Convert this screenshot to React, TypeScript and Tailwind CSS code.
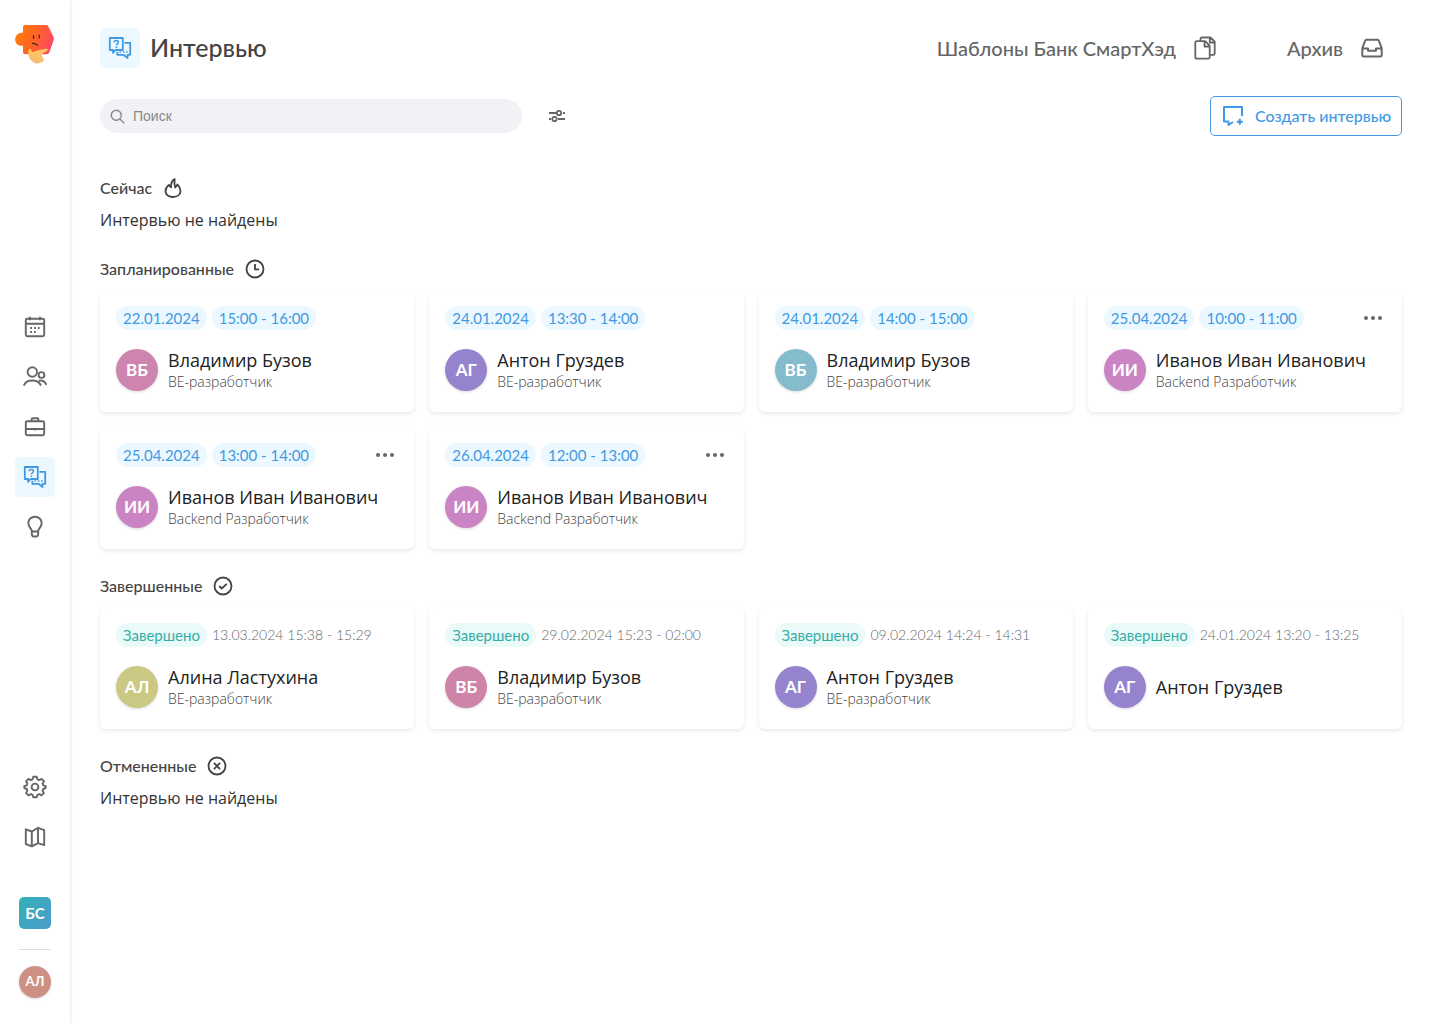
import React from 'react';

type IconProps = { className?: string };

function Svg({ className = 'size-6', children, sw = 1.9, box = '0 0 24 24' }: IconProps & { children: React.ReactNode; sw?: number; box?: string }) {
  return (
    <svg className={className} viewBox={box} fill="none" stroke="currentColor" strokeWidth={sw} strokeLinejoin="round" aria-hidden="true">
      {children}
    </svg>
  );
}

function Logo() {
  return (
    <svg className="h-10 w-10" viewBox="0 0 40 40" aria-hidden="true">
      <defs>
        <linearGradient id="head" x1="0" y1="0.3" x2="1" y2="0.6">
          <stop offset="0" stopColor="#ff7a0d" />
          <stop offset="0.5" stopColor="#ff6425" />
          <stop offset="1" stopColor="#ff4769" />
        </linearGradient>
        <linearGradient id="hand" x1="0" y1="0" x2="0" y2="1">
          <stop offset="0" stopColor="#ffc95c" />
          <stop offset="1" stopColor="#f3bb74" />
        </linearGradient>
      </defs>
      <path d="M10 1h21q1.600 0 2.400 1.400l5 10.400q.8 1.500.3 3.200l-4.400 12.500q-.6 1.700-2.500 1.700H10q-2 0-2-2v-6.500C3 22.500.2 19.500.2 15.500.2 11.500 3.500 8.500 8 8.500V3q0-2 2-2Z" fill="url(#head)" />
      <path d="M14 25.500c.6-1.500 1.700-.8 2 .6l1.200 2.200c2.500-1.200 5-1.700 7.800-2.300l5.800-1.200c2.300-.3 2.800 1.200 1 2.200l-4.600 2.600c-.9.700-.5 1.700 0 2.700l1.600 3.500q.5 1.400-1 2l-5 1.700q-2 .4-3.800-.8l-3.400-3c-2.200-2.300-3-7.100-1.600-10.200Z" fill="url(#hand)" />
      <path d="M18.500 11.500v3M24.200 11v3M17.300 19.400c2-.3 3.800.6 5.400 2" fill="none" stroke="#3c2720" strokeWidth="1.200" strokeLinecap="round" />
    </svg>
  );
}

function ChatIcon({ className }: IconProps) {
  return (
    <Svg className={className} sw={1.800}>
      <path d="M1.800 2h13v12H7.500L5 16.800V14H1.800V2Z" />
      <path d="M16.500 6.800h5.700v12H19.500V22l-4-3.200H9.300v-3" />
      <path d="M6.200 6.300c0-2.300 4.200-2.300 4.200 0 0 1.500-2 1.500-2 3M8.400 10.500V12" strokeWidth="1.500" />
      <path d="M11.500 16h1.600M14.800 16h1.600M18.100 16h1.600" strokeWidth="1.600" />
    </Svg>
  );
}

function CalendarIcon() {
  return (
    <Svg>
      <rect x="2.800" y="3.800" width="18.400" height="17.400" rx="1.500" />
      <path d="M3 8.800h18M7 1.800v3.500M17 1.800v3.500" />
      <path d="M11 13h1.800M14.800 13h1.800M7.200 13H9M7.200 17H9M11 17h1.800" strokeWidth="1.800" />
    </Svg>
  );
}

function PeopleIcon() {
  return (
    <Svg>
      <circle cx="9.300" cy="7" r="4.700" />
      <circle cx="18.500" cy="10" r="2.900" />
      <path d="M.8 20.500c1.400-3.200 4.500-5 8.500-5s7 1.600 8.700 5M15.500 15.800c3.500-1 6.500.8 7.900 4" />
    </Svg>
  );
}

function BriefcaseIcon() {
  return (
    <Svg>
      <rect x="2.800" y="6.300" width="18.400" height="14" rx="1.500" />
      <path d="M8.500 6V4.800q0-1.500 1.500-1.500h4q1.500 0 1.500 1.500V6M3 14h18M12 13v2.500" />
    </Svg>
  );
}

function BulbIcon() {
  return (
    <Svg>
      <path d="M9 16.300c0-2.500-3.700-4-3.700-8.300a6.700 6.300 0 0 1 13.400 0c0 4.300-3.700 5.800-3.700 8.300M8.800 16.500h6.400V19q0 2.500-2.200 2.500h-2q-2.200 0-2.200-2.500v-2.500Z" />
    </Svg>
  );
}

function GearIcon() {
  return (
    <Svg>
      <circle cx="12" cy="12" r="3.400" />
      <path d="M10.300 1.800h3.400l.8 2.600 1.700.7 2.400-1.200 2.300 2.300-1.300 2.500.7 1.700 2.400.8v1.800l-2.400 1-.7 1.600 1.300 2.500-2.400 2.300-2.300-1.300-1.700.7-.8 2.500h-3.400l-.8-2.500-1.700-.7-2.300 1.300-2.400-2.300 1.300-2.500-.7-1.600-2.400-1v-1.800l2.400-.8.7-1.700-1.300-2.500 2.400-2.300 2.300 1.200 1.700-.7.800-2.600Z" />
    </Svg>
  );
}

function MapIcon() {
  return (
    <Svg>
      <path d="m2.800 4.300 6 2.200 6.200-3.700 6.200 2.300v15l-6.200-2-6.200 3.200-6-2.300V4.300ZM8.800 6.500v14.800M15 2.800v15.300" />
    </Svg>
  );
}

function FilesIcon() {
  return (
    <Svg sw={1.800}>
      <path d="M7.500 4.800V3q0-1.500 1.500-1.500h8.500l4.200 4.200v11.800q0 1.300-1.300 1.300h-3.200M16.800 2v4.500h4.700" />
      <path d="M3.800 5.200h8.400l4.500 4.500v11.500q0 1.500-1.500 1.500H3.800q-1.500 0-1.500-1.500V6.700q0-1.500 1.500-1.500ZM11.500 5.500v5h5" />
    </Svg>
  );
}

function TrayIcon() {
  return (
    <Svg sw={2}>
      <path d="M6.500 3.800h11q1 0 1.400 1l2.800 7.400V19q0 1.500-1.500 1.500H3.800Q2.300 20.500 2.300 19v-6.800l2.800-7.400q.4-1 1.400-1ZM2.300 12.500H8v2.300h8v-2.300h5.700" />
    </Svg>
  );
}

function NewChatIcon() {
  return (
    <Svg sw={2}>
      <path d="M21 12V3H3v14.500h4.500V21l4.500-3M18.800 14.800v6M15.800 17.800h6" />
    </Svg>
  );
}

const FlameIcon = () => (
  <Svg sw={2.200}>
    <path d="M14 1.300c-5 3.200-4.500 7-4.300 9.800L7 8.300c-2.700 2.400-4 4.700-4 7.500 0 4.200 4 7 9 7s9-2.800 9-7.300c0-3.200-1.700-5.700-3.700-7.800l-2.600 3.600c-1.200-3.300-1.200-6.500-.7-10Z" />
  </Svg>
);
const ClockIcon = () => (
  <Svg sw={2.200}>
    <circle cx="12" cy="12" r="10.200" />
    <path d="M12 6v6.500h5" />
  </Svg>
);
const CheckIcon = () => (
  <Svg sw={2.200}>
    <circle cx="12" cy="12" r="10.200" />
    <path d="m7.500 12 3 3 6-5.500" />
  </Svg>
);
const CrossIcon = () => (
  <Svg sw={2.200}>
    <circle cx="12" cy="12" r="10.200" />
    <path d="m8.300 8.300 7.400 7.400M15.700 8.300l-7.400 7.400" />
  </Svg>
);

type Interview = { date: string; time: string; name: string; role?: string; initials: string; color: string; menu?: boolean };

const planned: Interview[] = [
  { date: '22.01.2024', time: '15:00 - 16:00', name: 'Владимир Бузов', role: 'BE-разработчик', initials: 'ВБ', color: 'bg-[#cd84ae]' },
  { date: '24.01.2024', time: '13:30 - 14:00', name: 'Антон Груздев', role: 'BE-разработчик', initials: 'АГ', color: 'bg-[#9584cd]' },
  { date: '24.01.2024', time: '14:00 - 15:00', name: 'Владимир Бузов', role: 'BE-разработчик', initials: 'ВБ', color: 'bg-[#84bccd]' },
  { date: '25.04.2024', time: '10:00 - 11:00', name: 'Иванов Иван Иванович', role: 'Backend Разработчик', initials: 'ИИ', color: 'bg-[#cb84c3]', menu: true },
  { date: '25.04.2024', time: '13:00 - 14:00', name: 'Иванов Иван Иванович', role: 'Backend Разработчик', initials: 'ИИ', color: 'bg-[#cb84c3]', menu: true },
  { date: '26.04.2024', time: '12:00 - 13:00', name: 'Иванов Иван Иванович', role: 'Backend Разработчик', initials: 'ИИ', color: 'bg-[#cb84c3]', menu: true },
];

const finished: Interview[] = [
  { date: '13.03.2024', time: '15:38 - 15:29', name: 'Алина Ластухина', role: 'BE-разработчик', initials: 'АЛ', color: 'bg-[#cbc884]' },
  { date: '29.02.2024', time: '15:23 - 02:00', name: 'Владимир Бузов', role: 'BE-разработчик', initials: 'ВБ', color: 'bg-[#cd84a8]' },
  { date: '09.02.2024', time: '14:24 - 14:31', name: 'Антон Груздев', role: 'BE-разработчик', initials: 'АГ', color: 'bg-[#9584cd]' },
  { date: '24.01.2024', time: '13:20 - 13:25', name: 'Антон Груздев', initials: 'АГ', color: 'bg-[#9584cd]' },
];

function Card({ item, done }: { item: Interview; done?: boolean }) {
  return (
    <article className="rounded-md bg-white px-4 pt-[15px] pb-[21px] shadow-[0_2px_4px_rgba(0,0,0,0.09)]">
      <div className="flex h-6 items-center gap-[5px] text-[15px] whitespace-nowrap">
        {done ? (
          <>
            <span className="flex h-6 items-center rounded-full bg-[#e9faf9] px-[7px] text-[#35ada5]">Завершено</span>
            <span className="text-sm font-light text-[#666]">{item.date} {item.time}</span>
          </>
        ) : (
          <>
            <span className="flex h-6 items-center rounded-full bg-[#ebf8ff] px-[7px] text-[#4299e1]">{item.date}</span>
            <span className="flex h-6 items-center rounded-full bg-[#ebf8ff] px-[7px] text-[#4299e1]">{item.time}</span>
          </>
        )}
        {item.menu && (
          <button type="button" aria-label="Действия" className="ml-auto flex h-6 w-[26px] items-center justify-center text-[#666]">
            <svg className="h-1 w-[18px]" viewBox="0 0 18 4" fill="currentColor" aria-hidden="true">
              <circle cx="2" cy="2" r="2" />
              <circle cx="9" cy="2" r="2" />
              <circle cx="16" cy="2" r="2" />
            </svg>
          </button>
        )}
      </div>
      <div className="mt-[19px] flex h-[42px] items-center gap-[10px]">
        <span className={`flex size-[42px] shrink-0 items-center justify-center rounded-full text-[17px] font-bold text-white shadow-[0_1px_3px_rgba(0,0,0,0.15)] ${item.color}`}>
          {item.initials}
        </span>
        <div className="font-['Open_Sans',sans-serif] whitespace-nowrap">
          <h3 className="text-lg leading-6 font-normal text-[#222]">{item.name}</h3>
          {item.role && <p className="text-sm leading-5 font-light text-[#444]">{item.role}</p>}
        </div>
      </div>
    </article>
  );
}

function Section({ title, icon, items, done }: { title: string; icon: React.ReactNode; items?: Interview[]; done?: boolean }) {
  return (
    <section>
      <h2 className="flex h-6 items-center gap-[11px] text-base font-medium text-[#444]">
        {title}
        <span className="[&>svg]:size-5">{icon}</span>
      </h2>
      {items ? (
        <div className="mt-[10px] grid grid-cols-4 gap-x-[15px] gap-y-4">
          {items.map((item, i) => (
            <Card key={i} item={item} done={done} />
          ))}
        </div>
      ) : (
        <p className="mt-2 font-['Open_Sans',sans-serif] text-base leading-6 text-[#333]">Интервью не найдены</p>
      )}
    </section>
  );
}

function NavLink({ label, children, active }: { label: string; children: React.ReactNode; active?: boolean }) {
  return (
    <a href="#" aria-label={label} className={`flex size-10 items-center justify-center rounded-[5px] ${active ? 'bg-[#ebf8ff] text-[#4299e1]' : 'text-[#666]'}`}>
      {children}
    </a>
  );
}

export default function App() {
  return (
    <div className="flex min-h-screen bg-white font-['Lato',sans-serif]">
      <aside className="sticky top-0 flex h-screen w-[70px] shrink-0 flex-col items-center pt-6 pb-[26px] shadow-[1px_0_3px_rgba(0,0,0,0.09)]">
        <a href="#" aria-label="Главная">
          <Logo />
        </a>
        <nav className="my-auto flex flex-col gap-[10px] pt-[22px]">
          <NavLink label="Календарь"><CalendarIcon /></NavLink>
          <NavLink label="Кандидаты"><PeopleIcon /></NavLink>
          <NavLink label="Вакансии"><BriefcaseIcon /></NavLink>
          <NavLink label="Интервью" active><ChatIcon className="size-6" /></NavLink>
          <NavLink label="Идеи"><BulbIcon /></NavLink>
        </nav>
        <div className="flex flex-col items-center gap-[10px]">
          <NavLink label="Настройки"><GearIcon /></NavLink>
          <NavLink label="Карта"><MapIcon /></NavLink>
        </div>
        <button type="button" className="mt-10 size-8 rounded-[5px] bg-linear-to-br from-[#32b0b5] to-[#4a9ccb] text-[15px] font-bold text-white">БС</button>
        <hr className="mt-5 mb-4 w-8 border-[#ddd]" />
        <button type="button" className="size-8 rounded-full bg-[#cd9184] text-[13px] font-bold text-white shadow-[0_1px_3px_rgba(0,0,0,0.15)]">АЛ</button>
      </aside>

      <main className="min-w-0 flex-1 pt-7 pr-[38px] pb-10 pl-[30px]">
        <header className="flex h-10 items-center justify-between">
          <div className="flex items-center gap-[10px]">
            <span className="flex size-10 items-center justify-center rounded-[5px] bg-[#ebf8ff] text-[#4299e1]">
              <ChatIcon className="size-6" />
            </span>
            <h1 className="text-[25px] font-medium text-[#444]">Интервью</h1>
          </div>
          <nav className="flex items-center gap-[70px] pr-[18px] text-xl font-medium text-[#666]">
            <a href="#" className="flex items-center gap-[17px]">Шаблоны Банк СмартХэд <FilesIcon /></a>
            <a href="#" className="flex items-center gap-[17px]">Архив <TrayIcon /></a>
          </nav>
        </header>

        <div className="mt-7 flex h-10 items-center">
          <label className="flex h-[34px] w-[422px] items-center gap-2 rounded-full bg-[#f0f2f5] px-[10px] text-[#888]">
            <Svg className="size-[15px] shrink-0" sw={2.200}>
              <circle cx="10" cy="10" r="8" />
              <path d="m16 16 7 7" />
            </Svg>
            <input type="search" aria-label="Поиск" placeholder="Поиск" className="min-w-0 flex-1 bg-transparent font-['Liberation_Sans',sans-serif] text-sm outline-none placeholder:text-[#888]" />
          </label>
          <button type="button" aria-label="Фильтры" className="ml-[26px] text-[#666]">
            <Svg className="h-[14px] w-[18px]" box="0 0 18 14" sw={1.800}>
              <path d="M1 4h7M15 4h2M1 10h2M10 10h7" />
              <circle cx="11" cy="4" r="2.200" />
              <circle cx="6.500" cy="10" r="2.200" />
            </Svg>
          </button>
          <button type="button" className="ml-auto flex h-10 items-center gap-[10px] rounded-[5px] border border-[#4299e1] px-[10px] text-base font-medium text-[#4299e1]">
            <NewChatIcon />
            Создать интервью
          </button>
        </div>

        <div className="mt-10 flex flex-col gap-[25px]">
          <Section title="Сейчас" icon={<FlameIcon />} />
          <Section title="Запланированные" icon={<ClockIcon />} items={planned} />
          <Section title="Завершенные" icon={<CheckIcon />} items={finished} done />
          <Section title="Отмененные" icon={<CrossIcon />} />
        </div>
      </main>
    </div>
  );
}
